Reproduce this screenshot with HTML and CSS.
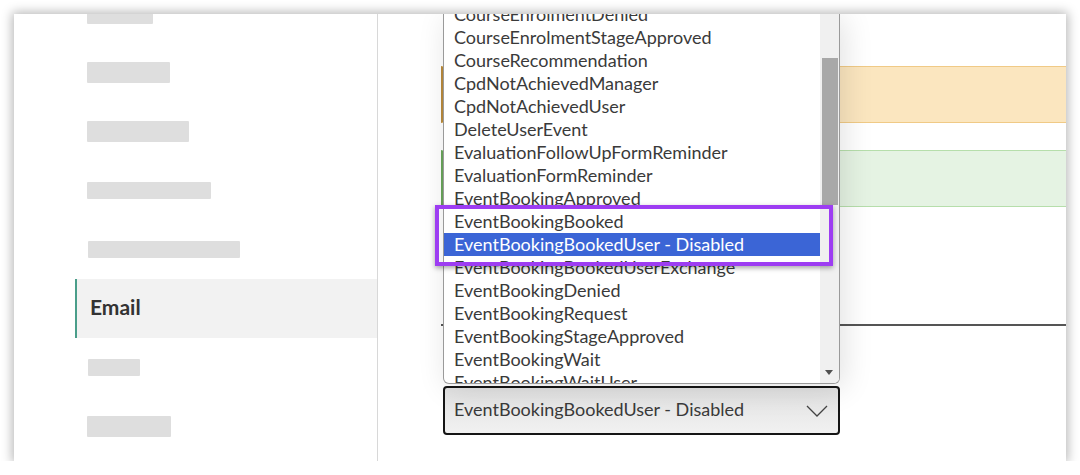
FILE: index.html
```html
<!DOCTYPE html>
<html lang="en">
<head>
    <meta charset="UTF-8">
    <meta name="viewport" content="width=device-width, initial-scale=1.0">
    <title>Email Templates</title>
    <link rel="stylesheet" href="styles.css">
</head>
<body>
    <div class="frame">
        <aside class="sidebar">
            <ul class="nav">
                <li class="nav-item"><span class="bar bar-tall" style="width: 66px"></span></li>
                <li class="nav-item"><span class="bar bar-tall" style="width: 83px"></span></li>
                <li class="nav-item"><span class="bar bar-tall" style="width: 102px"></span></li>
                <li class="nav-item"><span class="bar" style="width: 124px"></span></li>
                <li class="nav-item"><span class="bar bar-wide" style="width: 152px"></span></li>
                <li class="nav-item active">Email</li>
                <li class="nav-item"><span class="bar bar-wide" style="width: 52px"></span></li>
                <li class="nav-item"><span class="bar bar-tall" style="width: 84px"></span></li>
            </ul>
        </aside>

        <main class="content">
            <div class="alert alert-warning"></div>
            <div class="alert alert-success"></div>
            <div class="rule"></div>

            <div class="select-box">
                <span>EventBookingBookedUser - Disabled</span>
                <svg class="chevron" width="22" height="12" viewBox="0 0 22 12" aria-hidden="true">
                    <path d="M1 1 L11 11 L21 1" fill="none" stroke="#444" stroke-width="1.3"/>
                </svg>
            </div>

            <div class="listbox">
                <ul class="options">
                    <li>CourseEnrolmentDenied</li>
                    <li>CourseEnrolmentStageApproved</li>
                    <li>CourseRecommendation</li>
                    <li>CpdNotAchievedManager</li>
                    <li>CpdNotAchievedUser</li>
                    <li>DeleteUserEvent</li>
                    <li>EvaluationFollowUpFormReminder</li>
                    <li>EvaluationFormReminder</li>
                    <li>EventBookingApproved</li>
                    <li>EventBookingBooked</li>
                    <li class="selected">EventBookingBookedUser - Disabled</li>
                    <li>EventBookingBookedUserExchange</li>
                    <li>EventBookingDenied</li>
                    <li>EventBookingRequest</li>
                    <li>EventBookingStageApproved</li>
                    <li>EventBookingWait</li>
                    <li>EventBookingWaitUser</li>
                </ul>
                <div class="scrollbar">
                    <div class="scroll-thumb"></div>
                    <div class="scroll-arrow"></div>
                </div>
            </div>

            <div class="callout"></div>
        </main>
    </div>
</body>
</html>
```

FILE: styles.css
```css
:root {
    --text-color: #3a3a3a;
    --placeholder: #dedede;
    --accent: #4a9e8a;
    --highlight: #3b65d6;
    --callout: #9d3df2;
}

body {
    margin: 0;
    padding: 0;
    background-color: #ffffff;
    font-family: 'Lato', 'Open Sans', sans-serif;
    color: var(--text-color);
}

.frame {
    margin: 14px 0 0 14px;
    width: 1052px;
    height: 447px;
    display: flex;
    overflow: hidden;
    background-color: white;
    box-shadow: 0 0 10px 2px rgba(0, 0, 0, 0.28);
}

/* Sidebar */
.sidebar {
    width: 363px;
    flex-shrink: 0;
    border-right: 1px solid #d8d8d8;
}

.nav {
    list-style: none;
    margin: -30px 0 0 61px;
    padding: 0;
}

.nav-item {
    height: 59px;
    box-sizing: border-box;
    display: flex;
    align-items: center;
    padding-left: 10px;
    border-left: 2px solid transparent;
}

.nav-item.active {
    background-color: #f2f2f2;
    border-left-color: var(--accent);
    padding: 0 0 4px 13px;
    font-size: 21px;
    font-weight: 700;
    color: #333;
}

.bar {
    display: block;
    height: 17px;
    background-color: var(--placeholder);
    border-radius: 1px;
}

.bar-tall {
    height: 21px;
}

.bar-wide {
    margin-left: 1px;
}

/* Main content */
.content {
    flex: 1;
    position: relative;
    padding-left: 63px;
}

.alert {
    height: 55px;
    border-top: 1px solid;
    border-bottom: 1px solid;
    border-left: 2px solid;
}

.alert-warning {
    margin-top: 52px;
    background-color: #fbe6bf;
    border-color: #f0ca86;
    border-left-color: #b98a3c;
}

.alert-success {
    margin-top: 27px;
    background-color: #e5f3e3;
    border-color: #b6deab;
    border-left-color: #6aa65b;
}

.rule {
    margin-top: 117px;
    height: 2px;
    background-color: #555;
}

.select-box {
    margin: 60px 0 0 2px;
    width: 397px;
    height: 49px;
    box-sizing: border-box;
    border: 2px solid #151515;
    border-radius: 4px;
    background: linear-gradient(#e2e2e2, #f1f1f1);
    display: flex;
    align-items: center;
    justify-content: space-between;
    padding: 0 10px 3px 9px;
    font-size: 18px;
    color: #3a3a3a;
}

.chevron {
    margin-top: 4px;
}

/* Open dropdown list */
.listbox {
    position: absolute;
    top: 0;
    left: 65px;
    width: 397px;
    height: 370px;
    box-sizing: border-box;
    display: flex;
    background-color: white;
    border: 1px solid #9a9a9a;
    border-top: none;
    border-radius: 0 0 6px 6px;
    overflow: hidden;
    box-shadow: 4px 4px 30px rgba(0, 0, 0, 0.12);
}

.options {
    flex: 1;
    list-style: none;
    margin: -11px 0 0 0;
    padding: 0;
}

.options li {
    height: 23px;
    line-height: 23px;
    padding-left: 10px;
    font-size: 18px;
    white-space: nowrap;
}

.options li.selected {
    background-color: var(--highlight);
    color: white;
}

.scrollbar {
    width: 19px;
    flex-shrink: 0;
    background-color: #f0f0f0;
    position: relative;
}

.scroll-thumb {
    margin: 44px 0 0 2px;
    width: 16px;
    height: 147px;
    background-color: #a8a8a8;
}

.scroll-arrow {
    position: absolute;
    bottom: 8px;
    left: 5px;
    width: 0;
    height: 0;
    border-left: 4px solid transparent;
    border-right: 4px solid transparent;
    border-top: 5px solid #505050;
}

/* Purple annotation box */
.callout {
    position: absolute;
    top: 191px;
    left: 57px;
    width: 398px;
    height: 61px;
    box-sizing: border-box;
    border: 4px solid var(--callout);
    box-shadow: 0 2px 5px rgba(0, 0, 0, 0.35);
}
```
